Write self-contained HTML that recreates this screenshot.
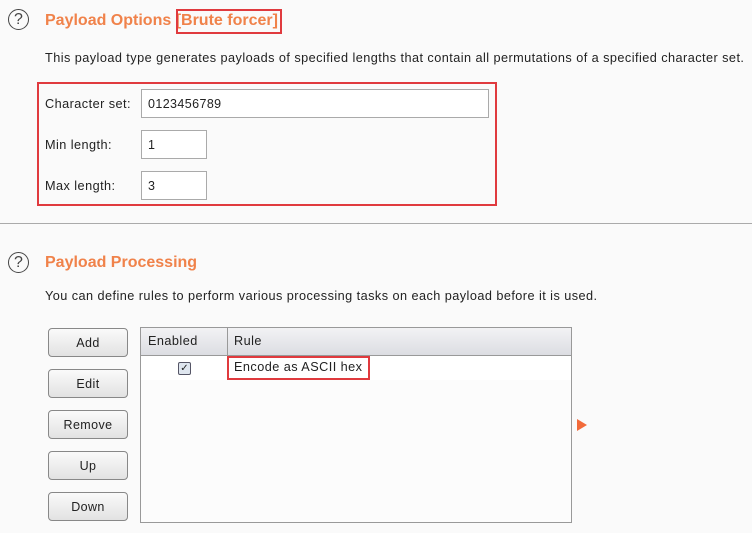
<!DOCTYPE html><html><head><style>
body{margin:0;width:752px;height:533px;background:#fafafa;font-family:"Liberation Sans",sans-serif;position:relative;overflow:hidden;color:#222}
.a{position:absolute}
.h{font-size:16px;font-weight:bold;color:#f0824a;white-space:nowrap}
.t{font-size:12.7px;letter-spacing:0.45px;white-space:nowrap}
.q{width:19px;height:19px;border:1.5px solid #444;border-radius:50%;font-size:16px;text-align:center;line-height:19px;color:#444}
.in{background:#fff;border:1px solid #aaa;box-sizing:border-box;font-size:12.5px;letter-spacing:0.4px;padding-left:6px;line-height:29px}
.rb{border:2px solid #e03a3e;box-sizing:border-box}
.b{left:48px;width:80px;height:29px;box-sizing:border-box;border:1px solid #888;border-radius:4px;background:linear-gradient(#fafafa,#e2e2e2);font-size:12.5px;letter-spacing:0.4px;text-align:center;line-height:29px}
</style></head><body>
<div class="a q" style="left:8px;top:9px">?</div>
<div class="a h" style="left:45px;top:12px">Payload Options <span>[Brute forcer]</span></div>
<div class="a rb" style="left:176px;top:9px;width:106px;height:25px"></div>
<div class="a t" style="left:45px;top:51px">This payload type generates payloads of specified lengths that contain all permutations of a specified character set.</div>
<div class="a rb" style="left:37px;top:82px;width:460px;height:124px"></div>
<div class="a t" style="left:45px;top:97px">Character set:</div>
<div class="a in" style="left:141px;top:89px;width:348px;height:29px">0123456789</div>
<div class="a t" style="left:45px;top:138px">Min length:</div>
<div class="a in" style="left:141px;top:130px;width:66px;height:29px">1</div>
<div class="a t" style="left:45px;top:179px">Max length:</div>
<div class="a in" style="left:141px;top:171px;width:66px;height:29px">3</div>
<div class="a" style="left:0;top:223px;width:752px;height:1px;background:#aaa"></div>
<div class="a q" style="left:8px;top:252px">?</div>
<div class="a h" style="left:45px;top:254px">Payload Processing</div>
<div class="a t" style="left:45px;top:289px">You can define rules to perform various processing tasks on each payload before it is used.</div>
<div class="a b" style="top:328px">Add</div>
<div class="a b" style="top:369px">Edit</div>
<div class="a b" style="top:410px">Remove</div>
<div class="a b" style="top:451px">Up</div>
<div class="a b" style="top:492px">Down</div>
<div class="a" style="left:140px;top:327px;width:432px;height:196px;box-sizing:border-box;border:1px solid #999;background:#fcfcfc"></div>
<div class="a" style="left:141px;top:328px;width:430px;height:27px;background:linear-gradient(#f2f2f4,#dcdde2);border-bottom:1px solid #999"></div>
<div class="a" style="left:227px;top:328px;width:1px;height:27px;background:#999"></div>
<div class="a t" style="left:148px;top:334px">Enabled</div>
<div class="a t" style="left:234px;top:334px">Rule</div>
<div class="a" style="left:141px;top:356px;width:430px;height:24px;background:#fff"></div>
<div class="a" style="left:178px;top:362px;width:11px;height:11px;border:1px solid #556;border-radius:2px;background:#dfe6ef;font-size:10px;line-height:11px;text-align:center">✓</div>
<div class="a rb" style="left:227px;top:356px;width:143px;height:24px"></div>
<div class="a t" style="left:234px;top:360px">Encode as ASCII hex</div>
<div class="a" style="left:577px;top:419px;width:0;height:0;border-left:10px solid #f26a3a;border-top:6px solid transparent;border-bottom:6px solid transparent"></div>
</body></html>
